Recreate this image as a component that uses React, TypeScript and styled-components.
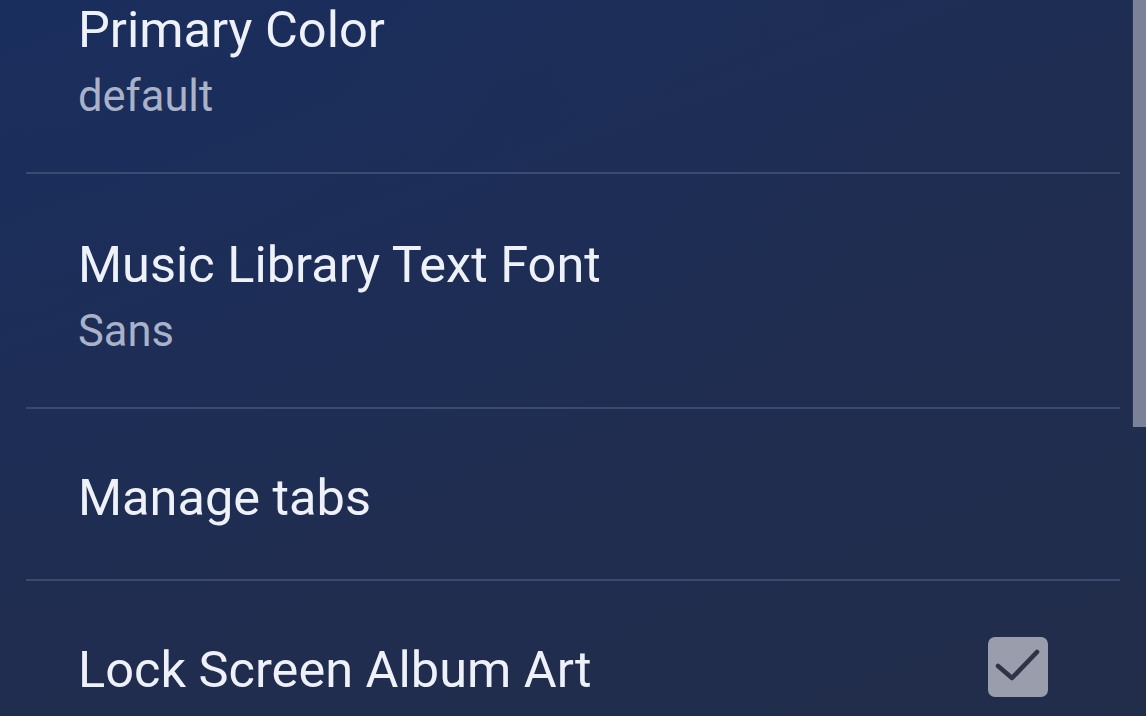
import styled, { createGlobalStyle } from 'styled-components'

const Global = createGlobalStyle`
  html, body {
    margin: 0;
    padding: 0;
    overflow: hidden;
  }
  body {
    font-family: Roboto, "Noto Sans", sans-serif;
    background: #1e2d52;
  }
`

type Pref = {
  title: string
  summary?: string
  checked?: boolean
}

const prefs: Pref[] = [
  { title: 'Primary Color', summary: 'default' },
  { title: 'Music Library Text Font', summary: 'Sans' },
  { title: 'Manage tabs' },
  { title: 'Lock Screen Album Art', checked: true },
]

export default function App() {
  return (
    <Screen>
      <Global />
      <List>
        {prefs.map((p, i) => (
          <li key={p.title}>
            <Row tall={!!p.summary}>
              <Texts>
                <Title>{p.title}</Title>
                {p.summary && <Summary>{p.summary}</Summary>}
              </Texts>
              {p.checked !== undefined && (
                <Check aria-checked={p.checked}>
                  <svg width="60" height="60" viewBox="0 0 60 60">
                    <path
                      d="M10 29 L24 41 L49 15"
                      fill="none"
                      stroke="#2e3447"
                      strokeWidth="4.6"
                      strokeLinecap="round"
                      strokeLinejoin="round"
                    />
                  </svg>
                </Check>
              )}
            </Row>
            {i < prefs.length - 1 && <Divider />}
          </li>
        ))}
      </List>
      <ScrollThumb />
    </Screen>
  )
}

const Screen = styled.div`
  position: relative;
  width: 1146px;
  height: 716px;
  overflow: hidden;
  background:
    radial-gradient(ellipse at 0% 0%, rgba(24, 46, 96, 0.55), transparent 60%),
    linear-gradient(160deg, #1c2e5a 0%, #1f2d52 45%, #222d4a 100%);
`

const List = styled.ul`
  list-style: none;
  margin: -61px 0 0;
  padding: 0;
`

const Row = styled.div<{ tall: boolean }>`
  display: flex;
  align-items: center;
  justify-content: space-between;
  height: ${p => (p.tall ? '233px' : '170px')};
  padding: ${p => (p.tall ? '14px' : '7px')} 98px 0 78px;
  box-sizing: border-box;
`

const Texts = styled.div`
  display: flex;
  flex-direction: column;
`

const Title = styled.div`
  color: #eef1f8;
  font-size: 50.5px;
  line-height: 60px;
`

const Summary = styled.div`
  color: #a9b2c8;
  font-size: 43.5px;
  line-height: 56px;
  margin-top: 9px;
`

const Divider = styled.div`
  height: 2px;
  margin: 0 26px;
  background: #3a4b72;
`

const Check = styled.div`
  width: 60px;
  height: 60px;
  margin-top: -6px;
  border-radius: 7px;
  background: #9a9dab;
  display: flex;
  align-items: center;
  justify-content: center;
`

const ScrollThumb = styled.div`
  position: absolute;
  top: 0;
  right: 0;
  width: 13px;
  height: 427px;
  background: #7a8198;
  box-shadow: -1px 0 0 #2c3656;
`
